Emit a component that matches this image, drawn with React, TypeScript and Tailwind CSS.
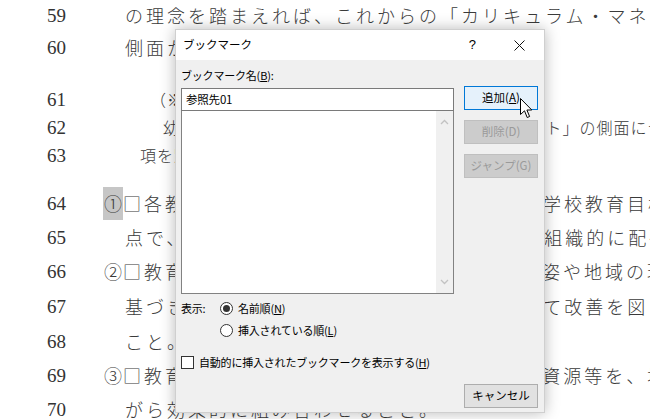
import type { ReactNode } from "react";

type Line = { no: string; gap: string; indent: string; size: string; text: ReactNode };

const mark = (ch: string, hi?: boolean) => (
  <span
    className={`inline-flex h-[33px] w-[20px] items-center justify-center tracking-normal ${hi ? "bg-[#c6c6c6]" : ""}`}
  >
    {ch}
  </span>
);

const lines: Line[] = [
  { no: "59", gap: "mt-[1px]", indent: "pl-[59px]", size: "big", text: "の理念を踏まえれば、これからの「カリキュラム・マネジメント」については、" },
  { no: "60", gap: "mt-[4px]", indent: "pl-[59px]", size: "big", text: "側面から捉えることができる。" },
  { no: "61", gap: "mt-[24px]", indent: "pl-[84px]", size: "small", text: "（※）カリキュラム・マネジメントの三つの側面" },
  { no: "62", gap: "mt-0", indent: "pl-[97px]", size: "small", text: "幼稚園教育要領では、「カリキュラム・マネジメント」の側面についての" },
  { no: "63", gap: "mt-0", indent: "pl-[74px]", size: "small", text: "項を踏まえて、次のように整理した。" },
  { no: "64", gap: "mt-[20px]", indent: "pl-[37px]", size: "big", text: <>{mark("①", true)}□各教科等の教育内容を相互の関係で捉え、学校教育目標を踏まえた教科等横断的な視</> },
  { no: "65", gap: "mt-[6px]", indent: "pl-[59px]", size: "big", text: "点で、その目標の達成に必要な教育の内容を組織的に配列していくこと。" },
  { no: "66", gap: "mt-[6px]", indent: "pl-[37px]", size: "big", text: <>{mark("②")}□教育内容の質の向上に向けて、子供たちの姿や地域の現状等に関する調査</> },
  { no: "67", gap: "mt-[7px]", indent: "pl-[59px]", size: "big", text: "基づき、教育課程を編成し、実施し、評価して改善を図る一連のＰＤＣＡ" },
  { no: "68", gap: "mt-[7px]", indent: "pl-[59px]", size: "big", text: "こと。" },
  { no: "69", gap: "mt-[6px]", indent: "pl-[37px]", size: "big", text: <>{mark("③")}□教育内容と、教育活動に必要な人的・物的資源等を、地域等の外部の資源</> },
  { no: "70", gap: "mt-[6px]", indent: "pl-[59px]", size: "big", text: "がら効果的に組み合わせること。" },
];

function Radio({ on }: { on?: boolean }) {
  return (
    <span className="flex h-[13px] w-[13px] items-center justify-center rounded-full border border-[#333] bg-white">
      {on && <span className="h-[7px] w-[7px] rounded-full bg-[#333]" />}
    </span>
  );
}

function Btn({ children, kind }: { children: ReactNode; kind: "default" | "off" | "plain" }) {
  const look =
    kind === "default"
      ? "border-[#0078d7] bg-[#e5f1fb] text-black"
      : kind === "off"
        ? "border-[#bfbfbf] bg-[#cccccc] text-[#9a9a9a]"
        : "border-[#adadad] bg-[#e1e1e1] text-black";
  return <div className={`flex h-[24px] w-[74px] items-center justify-center border text-[11.5px] ${look}`}>{children}</div>;
}

function Chevron({ up }: { up?: boolean }) {
  return (
    <svg width="9" height="6" viewBox="0 0 9 6" fill="none" stroke="#c2c2c2" strokeWidth="1.3">
      {up ? <path d="M1 5 L4.5 1.5 L8 5" /> : <path d="M1 1 L4.5 4.5 L8 1" />}
    </svg>
  );
}

export default function App() {
  return (
    <div className="relative h-[419px] w-[650px] overflow-hidden bg-white text-[#3a3a3a]">
      {lines.map((l) => (
        <div key={l.no} className={`flex h-[28px] items-center whitespace-nowrap ${l.gap}`}>
          <div className="w-[66px] shrink-0 text-right font-['Liberation_Serif',serif] text-[19px] leading-none text-[#333]">{l.no}</div>
          <div
            className={`${l.indent} flex items-center font-['Noto_Sans_CJK_JP',sans-serif] font-light leading-none ${
              l.size === "big" ? "text-[18px] tracking-[3px]" : "text-[16px] tracking-[1px]"
            }`}
          >
            {l.text}
          </div>
        </div>
      ))}

      {/* dialog */}
      <div className="absolute left-[175px] top-[29px] flex h-[384px] w-[370px] flex-col border border-[#cfcfcf] bg-[#f0f0f0] font-['Noto_Sans_CJK_JP',sans-serif] text-black shadow-[0_0_14px_rgba(0,0,0,0.28)]">
        <div className="flex h-[30px] items-center bg-white text-[11.5px]">
          <span className="pl-[7px]">ブックマーク</span>
          <span className="ml-auto mr-[37px] font-['Liberation_Sans',sans-serif] text-[13px]">?</span>
          <span className="mr-[19px] flex h-[12px] w-[12px] items-center justify-center">
            <svg width="11" height="11" viewBox="0 0 11 11" stroke="#111" strokeWidth="1">
              <path d="M0.5 0.5 L10.5 10.5 M10.5 0.5 L0.5 10.5" />
            </svg>
          </span>
        </div>

        <div className="flex flex-1 gap-[10px] pl-[5px] pb-[4px]">
          <div className="flex w-[273px] flex-col text-[11px] tracking-[-0.2px]">
            <div className="mt-[7px] h-[16px] leading-[16px]">
              ブックマーク名(<span className="underline">B</span>):
            </div>
            <div className="mt-[5px] flex h-[23px] items-center border border-[#7a7a7a] bg-white pl-[4px] text-[11.5px]">参照先01</div>
            <div className="flex h-[183px] border border-t-0 border-[#828282] bg-white">
              <div className="ml-auto flex w-[17px] flex-col items-center justify-between bg-[#f0f0f0] py-[8px]">
                <Chevron up />
                <Chevron />
              </div>
            </div>
            <div className="mt-[6px] flex h-[16px] items-center">
              <span className="w-[39px]">表示:</span>
              <Radio on />
              <span className="ml-[5px]">
                名前順(<span className="underline">N</span>)
              </span>
            </div>
            <div className="mt-[6px] flex h-[16px] items-center pl-[39px]">
              <Radio />
              <span className="ml-[5px]">
                挿入されている順(<span className="underline">L</span>)
              </span>
            </div>
            <div className="mt-[16px] flex h-[16px] items-center">
              <span className="h-[13px] w-[13px] border border-[#333] bg-white" />
              <span className="ml-[5px]">
                自動的に挿入されたブックマークを表示する(<span className="underline">H</span>)
              </span>
            </div>
          </div>

          <div className="flex flex-col pt-[26px]">
            <Btn kind="default">
              追加(<span className="underline">A</span>)
            </Btn>
            <div className="mt-[10px]">
              <Btn kind="off">削除(D)</Btn>
            </div>
            <div className="mt-[10px]">
              <Btn kind="off">ジャンプ(G)</Btn>
            </div>
            <div className="mt-auto">
              <Btn kind="plain">キャンセル</Btn>
            </div>
          </div>
        </div>
      </div>

      {/* mouse pointer */}
      <svg className="absolute left-[520px] top-[98px]" width="13" height="21" viewBox="0 0 13 21">
        <path d="M0.5 0.5 L0.5 16.5 L4.5 12.8 L7.2 19.5 L9.6 18.5 L6.9 12 L11.8 12 Z" fill="#fff" stroke="#000" strokeWidth="1" strokeLinejoin="round" />
      </svg>
    </div>
  );
}
